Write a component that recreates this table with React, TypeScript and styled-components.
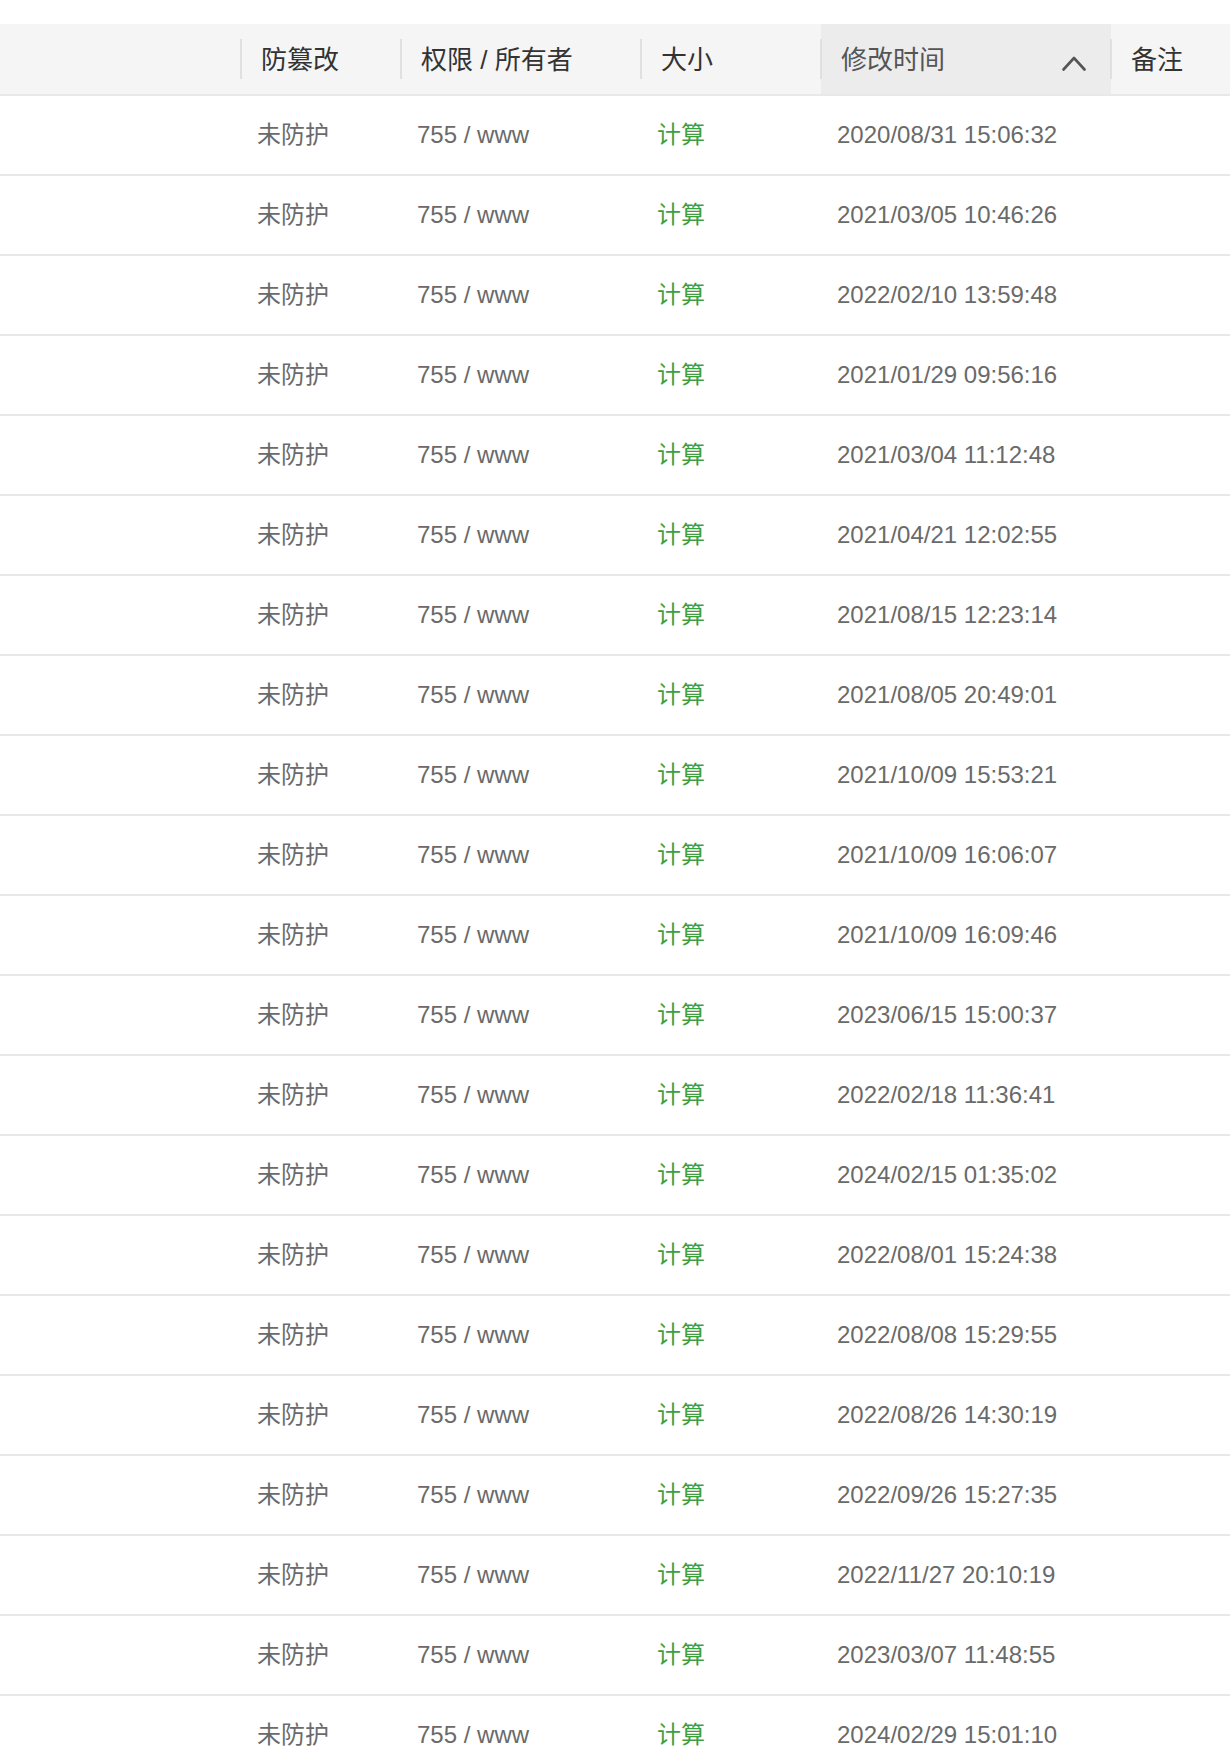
import React from "react";
import styled, { createGlobalStyle } from "styled-components";

const GlobalStyle = createGlobalStyle`
  html, body {
    margin: 0;
    padding: 0;
    background: #ffffff;
  }
  body {
    font-family: "Liberation Sans", "Noto Sans CJK SC", sans-serif;
    -webkit-font-smoothing: antialiased;
  }
`;

const COLUMNS = "241px 160px 240px 180px 290px 1fr";

const Page = styled.div`
  width: 1230px;
  padding-top: 24px;
  overflow: hidden;
`;

const Table = styled.div`
  display: flex;
  flex-direction: column;
  width: 100%;
`;

const HeaderRow = styled.div`
  display: grid;
  grid-template-columns: ${COLUMNS};
  height: 70px;
  background: #f5f5f5;
  border-bottom: 2px solid #e8e8e8;
`;

const HeaderCell = styled.div<{ $sorted?: boolean; $noDivider?: boolean }>`
  position: relative;
  display: flex;
  align-items: center;
  justify-content: space-between;
  padding: 0 25px 0 20px;
  font-size: 26px;
  line-height: 1.2;
  color: ${(p) => (p.$sorted ? "#555555" : "#333333")};
  background: ${(p) => (p.$sorted ? "#ececec" : "transparent")};
  white-space: nowrap;

  &::before {
    content: "";
    display: ${(p) => (p.$noDivider ? "none" : "block")};
    position: absolute;
    left: -1px;
    top: 15px;
    height: 40px;
    width: 2px;
    background: #e0e0e0;
  }
`;

const HeaderLabel = styled.span`
  padding-top: 3px;
`;

const SortIcon = styled.svg`
  width: 24px;
  height: 15px;
  margin-top: 8px;
  flex: none;
`;

const Row = styled.div`
  display: grid;
  grid-template-columns: ${COLUMNS};
  height: 78px;
  border-bottom: 2px solid #e8e8e8;
`;

const Cell = styled.div<{ $tone?: "muted" | "link" }>`
  display: flex;
  align-items: center;
  padding: 0 16px;
  font-size: 24px;
  line-height: 1.2;
  color: ${(p) => (p.$tone === "link" ? "#3f9f40" : "#6a6a6a")};
  white-space: nowrap;
  cursor: ${(p) => (p.$tone === "link" ? "pointer" : "default")};
`;

const DATES = [
  "2020/08/31 15:06:32",
  "2021/03/05 10:46:26",
  "2022/02/10 13:59:48",
  "2021/01/29 09:56:16",
  "2021/03/04 11:12:48",
  "2021/04/21 12:02:55",
  "2021/08/15 12:23:14",
  "2021/08/05 20:49:01",
  "2021/10/09 15:53:21",
  "2021/10/09 16:06:07",
  "2021/10/09 16:09:46",
  "2023/06/15 15:00:37",
  "2022/02/18 11:36:41",
  "2024/02/15 01:35:02",
  "2022/08/01 15:24:38",
  "2022/08/08 15:29:55",
  "2022/08/26 14:30:19",
  "2022/09/26 15:27:35",
  "2022/11/27 20:10:19",
  "2023/03/07 11:48:55",
  "2024/02/29 15:01:10",
];

export default function App() {
  return (
    <>
      <GlobalStyle />
      <Page>
        <Table>
          <HeaderRow>
            <HeaderCell $noDivider />
            <HeaderCell>
              <HeaderLabel>防篡改</HeaderLabel>
            </HeaderCell>
            <HeaderCell>
              <HeaderLabel>权限 / 所有者</HeaderLabel>
            </HeaderCell>
            <HeaderCell>
              <HeaderLabel>大小</HeaderLabel>
            </HeaderCell>
            <HeaderCell $sorted>
              <HeaderLabel>修改时间</HeaderLabel>
              <SortIcon viewBox="0 0 24 15" fill="none">
                <polyline
                  points="1.5,13.5 12,2 22.5,13.5"
                  stroke="#555555"
                  strokeWidth="2.6"
                  strokeLinecap="round"
                  strokeLinejoin="round"
                />
              </SortIcon>
            </HeaderCell>
            <HeaderCell>
              <HeaderLabel>备注</HeaderLabel>
            </HeaderCell>
          </HeaderRow>
          {DATES.map((d, i) => (
            <Row key={i}>
              <Cell />
              <Cell>未防护</Cell>
              <Cell>755 / www</Cell>
              <Cell $tone="link">计算</Cell>
              <Cell>{d}</Cell>
              <Cell />
            </Row>
          ))}
        </Table>
      </Page>
    </>
  );
}
